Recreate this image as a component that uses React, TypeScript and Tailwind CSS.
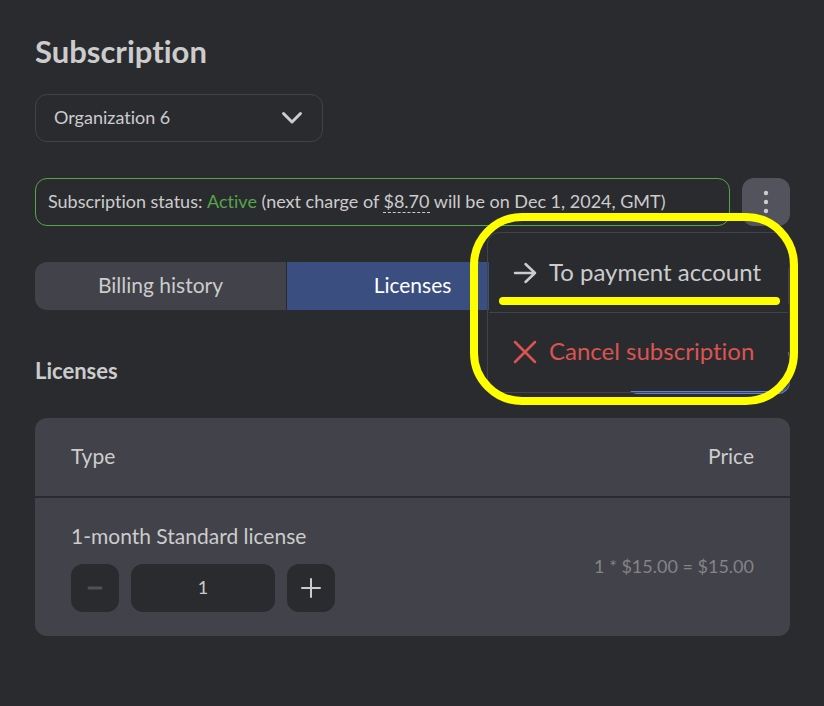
import { useState } from "react";

const PRICE = 15;

function MenuArrow() {
  return (
    <svg width="24" height="24" viewBox="0 0 24 24" fill="none" stroke="currentColor" strokeWidth="2.500" strokeLinecap="round" strokeLinejoin="round" aria-hidden="true">
      <path d="M2 12h20M12.500 3l9.500 9-9.500 9" />
    </svg>
  );
}

function MenuCross() {
  return (
    <svg width="24" height="24" viewBox="0 0 24 24" fill="none" stroke="currentColor" strokeWidth="2.500" strokeLinecap="round" aria-hidden="true">
      <path d="M2 2l20 20M22 2L2 22" />
    </svg>
  );
}

export default function App() {
  const [count, setCount] = useState(1);
  const total = (count * PRICE).toFixed(2);

  return (
    <main className="min-h-screen bg-[#2a2b2f] pt-8 pb-16 pl-[35px] pr-[34px] font-['Lato',sans-serif] text-[#cccccc] [font-variant-ligatures:none]">

      {/* ================= HEADER ================= */}
      <h1 className="text-[31px] leading-[38px] font-bold">Subscription</h1>

      <div className="relative mt-6 w-72">
        <select
          aria-label="Organization"
          className="block h-12 w-full appearance-none rounded-xl border border-[#42434a] bg-transparent pb-0.5 pl-[18px] pr-12 text-lg outline-none"
        >
          <option>Organization 6</option>
        </select>
        <svg className="pointer-events-none absolute top-3 right-[19px]" width="24" height="24" viewBox="0 0 24 24" fill="none" stroke="currentColor" strokeWidth="3" strokeLinecap="round" strokeLinejoin="round" aria-hidden="true">
          <path d="M3.500 7.500l8.500 8.500 8.500-8.500" />
        </svg>
      </div>

      {/* ================= STATUS ================= */}
      <div className="relative mt-9 flex gap-3">
        <p className="flex h-12 flex-1 items-center rounded-xl border border-[#56a548] pb-0.5 pl-3 text-lg whitespace-pre">
          Subscription status: <span className="text-[#56a548]">Active</span> (next charge of{" "}
          <span className="border-b border-dashed border-[#cccccc] leading-[22px]">$8.70</span> will be on Dec 1, 2024, GMT)
        </p>
        <button aria-label="More actions" className="flex size-12 items-center justify-center rounded-xl bg-[#53535d]">
          <svg width="24" height="24" viewBox="0 0 24 24" fill="currentColor" aria-hidden="true">
            <circle cx="12" cy="3" r="2.200" />
            <circle cx="12" cy="12" r="2.200" />
            <circle cx="12" cy="21" r="2.200" />
          </svg>
        </button>

        {/* MENU */}
        <div className="absolute top-[54px] right-0 z-10 w-[303px] rounded-xl border border-[#42434a] p-px text-2xl">
          <button className="flex h-[79px] w-full items-center gap-3 rounded-t-xl border-b border-[#42434a] bg-[#2a2b2f] pl-6 whitespace-nowrap">
            <MenuArrow />
            <span className="pb-0.5">To payment account</span>
          </button>
          <button className="flex h-[78px] w-full items-center gap-3 rounded-b-xl bg-[#2a2b2f] pl-6 whitespace-nowrap text-[#dc5350]">
            <MenuCross />
            <span className="pb-0.5">Cancel subscription</span>
          </button>
        </div>

        {/* HIGHLIGHT */}
        <div className="pointer-events-none absolute top-[35px] -right-2 z-20 h-48 w-[328px] rounded-[52px] border-8 border-[#ffff00]">
          <div className="absolute top-[76px] left-[21px] h-2 w-[281px] rounded-full bg-[#ffff00]" />
        </div>
      </div>

      {/* ================= TABS ================= */}
      <nav className="mt-9 grid grid-cols-3 gap-px overflow-hidden rounded-xl text-[21px]">
        <button className="h-12 bg-[#42424a] pb-0.5">Billing history</button>
        <button className="h-12 bg-[#3a4f80] pb-0.5 text-white">Licenses</button>
        <button className="h-12 bg-[#42424a]" aria-label="Payments" />
      </nav>

      {/* ================= LICENSES ================= */}
      <div className="mt-9 flex h-12 items-center justify-between">
        <h2 className="text-[22px] font-bold">Licenses</h2>
        <button aria-label="Buy licenses" className="h-12 w-[164px] rounded-xl border border-b-3 border-[#5b80d6]" />
      </div>

      <table className="mt-6 w-full border-separate border-spacing-0 overflow-hidden rounded-xl bg-[#42424a]">
        <thead>
          <tr className="h-20 text-[21px]">
            <th className="border-b-2 border-[#2a2b2f] pb-0.5 pl-9 text-left font-normal">Type</th>
            <th className="border-b-2 border-[#2a2b2f] pr-9 pb-0.5 text-right font-normal">Price</th>
          </tr>
        </thead>
        <tbody>
          <tr>
            <td className="py-6 pl-9">
              <label htmlFor="license-count" className="block text-[21px] leading-7">1-month Standard license</label>
              <div className="mt-3.5 flex gap-3">
                <button
                  aria-label="Remove one"
                  disabled={count <= 1}
                  onClick={() => setCount(count - 1)}
                  className="flex size-12 items-center justify-center rounded-xl bg-[#2a2b2f] disabled:text-[#515156]"
                >
                  <svg width="24" height="24" viewBox="0 0 24 24" stroke="currentColor" strokeWidth="3" strokeLinecap="round" aria-hidden="true">
                    <path d="M6 12h12" />
                  </svg>
                </button>
                <input
                  id="license-count"
                  value={count}
                  onChange={(e) => setCount(Math.max(1, Number(e.target.value) || 1))}
                  className="h-12 w-36 rounded-xl bg-[#2a2b2f] pb-0.5 text-center text-lg outline-none"
                />
                <button
                  aria-label="Add one"
                  onClick={() => setCount(count + 1)}
                  className="flex size-12 items-center justify-center rounded-xl bg-[#2a2b2f]"
                >
                  <svg width="24" height="24" viewBox="0 0 24 24" stroke="currentColor" strokeWidth="2" strokeLinecap="round" aria-hidden="true">
                    <path d="M3 12h18M12 3v18" />
                  </svg>
                </button>
              </div>
            </td>
            <td className="pr-9 pb-0.5 text-right text-lg text-[#848484]">
              {count} * $15.00 = ${total}
            </td>
          </tr>
        </tbody>
      </table>

    </main>
  );
}
